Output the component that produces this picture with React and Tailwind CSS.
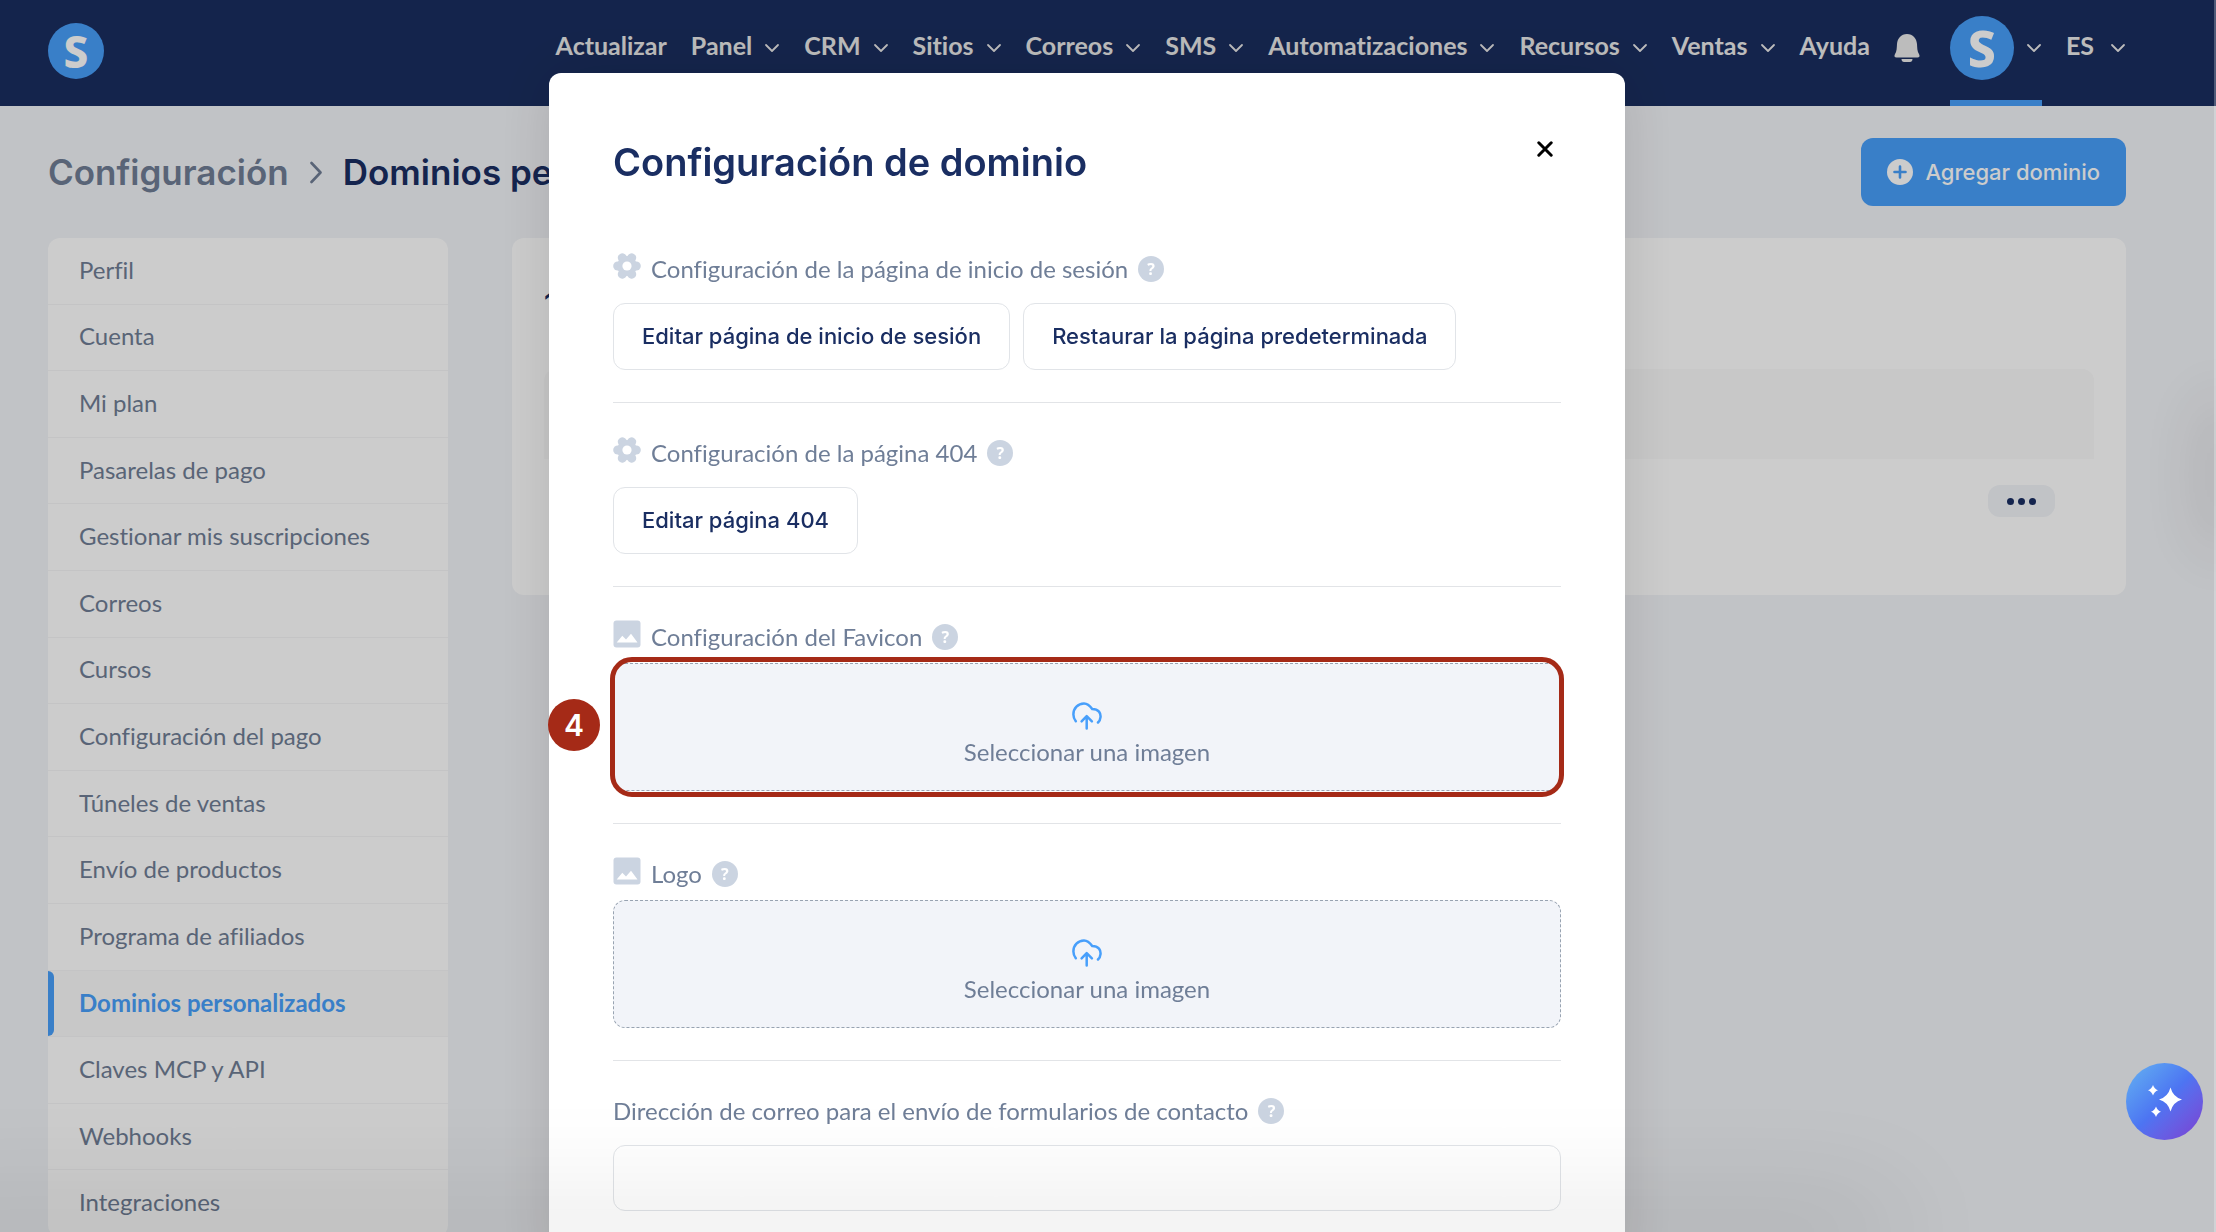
const NAV = [
  ["Actualizar", false],
  ["Panel", true],
  ["CRM", true],
  ["Sitios", true],
  ["Correos", true],
  ["SMS", true],
  ["Automatizaciones", true],
  ["Recursos", true],
  ["Ventas", true],
  ["Ayuda", false],
];

const SIDEBAR = [
  "Perfil",
  "Cuenta",
  "Mi plan",
  "Pasarelas de pago",
  "Gestionar mis suscripciones",
  "Correos",
  "Cursos",
  "Configuración del pago",
  "Túneles de ventas",
  "Envío de productos",
  "Programa de afiliados",
  "Dominios personalizados",
  "Claves MCP y API",
  "Webhooks",
  "Integraciones",
];

function ChevronDown() {
  return (
    <svg className="h-[10px] w-4" viewBox="0 0 16 10" fill="none" stroke="currentColor" strokeWidth="1.8" strokeLinecap="round" strokeLinejoin="round" aria-hidden="true">
      <path d="M2 2l6 6 6-6" />
    </svg>
  );
}

function Gear() {
  return (
    <svg className="mb-[6px] h-7 w-7 shrink-0" viewBox="-14 -14 28 28" aria-hidden="true">
      <g stroke="#cbd4e1" strokeWidth="9" strokeLinecap="round">
        <path d="M-9.3 0H9.3" />
        <path d="M-4.7 -8.2L4.7 8.2" />
        <path d="M4.7 -8.2L-4.7 8.2" />
      </g>
      <circle r="10" fill="#cbd4e1" />
      <circle r="4.6" fill="#fff" />
    </svg>
  );
}

function Picture() {
  return (
    <svg className="mb-[6px] h-7 w-7 shrink-0" viewBox="0 0 28 28" aria-hidden="true">
      <rect x="0.5" y="0.5" width="27" height="27" rx="3" fill="#cbd4e1" />
      <path d="M3.7 22.6L9.3 15.8L13 19.4L18 13.8L24.5 22.6Z" fill="#fff" />
    </svg>
  );
}

function Help() {
  return (
    <button type="button" aria-label="Ayuda" className="flex size-[26px] shrink-0 items-center justify-center rounded-full bg-[#cbd4e1] font-['Noto_Sans',sans-serif] text-[16px] leading-none font-bold text-white">
      ?
    </button>
  );
}

function Label({ icon, children, htmlFor }) {
  const Tag = htmlFor ? "label" : "span";
  return (
    <div className="flex h-9 items-center gap-[10px] text-[24px] leading-9 text-[#6f7e97]">
      {icon}
      <Tag htmlFor={htmlFor}>{children}</Tag>
      <Help />
    </div>
  );
}

function OutlineButton({ children }) {
  return (
    <button type="button" className="h-[67px] rounded-xl border border-[#e1e4e8] bg-white px-7 font-['Inter',sans-serif] text-[22px] font-medium text-[#1a2e62]">
      {children}
    </button>
  );
}

function Upload() {
  return (
    <button type="button" className="flex h-32 w-full flex-col items-center justify-center gap-1 rounded-xl border border-dashed border-[#98a3b1] bg-[#f2f4f9] pt-[18px]">
      <svg className="h-7 w-[30px]" viewBox="0 0 30 28" fill="none" stroke="#489ffb" strokeWidth="2.5" strokeLinecap="round" strokeLinejoin="round" aria-hidden="true">
        <path d="M3.8 19.3C2.3 17.3 1.4 15 1.4 12.4C1.4 6.3 6 1.5 12 1.5C15.4 1.5 17.8 3.6 20.2 7C23 7 25.2 7.6 27 9.6C29.4 12.6 29 17.5 26 20.5" />
        <path d="M14.7 26.6V14.4M9.6 19.4L14.7 14.2L19.9 19.4" />
      </svg>
      <span className="text-[24px] leading-9 text-[#6f7e97]">Seleccionar una imagen</span>
    </button>
  );
}

function Header() {
  return (
    <header className="flex h-[106px] justify-between bg-[#1a2e5f] pr-[90px] pl-12">
      <a href="#inicio" aria-label="Inicio" className="mt-[23px] flex size-14 items-center justify-center rounded-full bg-[#489ffb] font-['Noto_Sans',sans-serif] text-[44px] leading-none font-extrabold text-white">
        S
      </a>
      <nav className="flex h-24 items-center gap-6 text-[25px] font-bold text-[#ebebeb]">
        {NAV.map(([name, menu]) => (
          <button type="button" key={name} className="flex items-center gap-3">
            <span className="pb-1">{name}</span>
            {menu && <ChevronDown />}
          </button>
        ))}
        <button type="button" aria-label="Notificaciones">
          <svg className="h-7 w-[26px]" viewBox="0 0 26 28" fill="currentColor" aria-hidden="true">
            <path d="M13 0C7 0 3.5 4.5 3 10C2.7 14 3 17 0.8 20.5C0 22.2 0.6 23.6 2.5 23.6H23.5C25.4 23.6 26 22.2 25.2 20.5C23 17 23.3 14 23 10C22.5 4.5 19 0 13 0Z" />
            <path d="M7.5 25H18.5C18.5 27 17.4 28 16 28H10C8.6 28 7.5 27 7.5 25Z" />
          </svg>
        </button>
        <button type="button" aria-label="Mi cuenta" className="relative ml-[6px] flex h-24 items-center gap-3">
          <span className="flex size-16 items-center justify-center rounded-full bg-[#489ffb] font-['Noto_Sans',sans-serif] text-[50px] leading-none font-extrabold text-white">S</span>
          <ChevronDown />
          <span className="absolute inset-x-0 -bottom-[10px] h-[6px] bg-[#489ffb]" />
        </button>
        <button type="button" className="flex items-center gap-4">
          <span className="pb-1">ES</span>
          <ChevronDown />
        </button>
      </nav>
    </header>
  );
}

function Sidebar() {
  return (
    <aside className="w-[400px] shrink-0 overflow-hidden rounded-xl bg-white">
      <ul className="grid h-[999px] auto-rows-fr">
        {SIDEBAR.map((name) => {
          const active = name === "Dominios personalizados";
          return (
            <li key={name} className={active ? "flex border-b border-[#f5f5f7] bg-[#fafafa]" : "flex border-b border-[#f5f5f7]"}>
              <a
                href="#seccion"
                className={
                  active
                    ? "flex flex-1 items-center text-[24px] font-bold text-[#489ffb] before:mr-[25px] before:h-full before:w-[6px] before:rounded-r-md before:bg-[#489ffb]"
                    : "flex flex-1 items-center pb-[2px] pl-[31px] text-[24px] text-[#707e95]"
                }
              >
                {name}
              </a>
            </li>
          );
        })}
      </ul>
    </aside>
  );
}

function Modal() {
  return (
    <section role="dialog" aria-labelledby="titulo" className="relative w-full max-w-[1076px] self-start rounded-xl bg-white px-16 pt-16 pb-16 shadow-[0_0_60px_rgba(0,0,0,0.12)]">
      <div className="flex justify-between">
        <h2 id="titulo" className="font-['Inter',sans-serif] text-[38px] leading-[50px] font-semibold text-[#1a2e62]">
          Configuración de dominio
        </h2>
        <button type="button" aria-label="Cerrar" className="mr-2 flex h-6 items-center">
          <svg className="size-4" viewBox="0 0 16 16" stroke="#000" strokeWidth="3" strokeLinecap="round" aria-hidden="true">
            <path d="M1.8 1.8L14.2 14.2M14.2 1.8L1.8 14.2" />
          </svg>
        </button>
      </div>

      <div className="mt-8 divide-y divide-[#e2e4e7]">
        <div className="py-8">
          <Label icon={<Gear />}>Configuración de la página de inicio de sesión</Label>
          <div className="mt-4 flex gap-[13px]">
            <OutlineButton>Editar página de inicio de sesión</OutlineButton>
            <OutlineButton>Restaurar la página predeterminada</OutlineButton>
          </div>
        </div>
        <div className="py-8">
          <Label icon={<Gear />}>Configuración de la página 404</Label>
          <div className="mt-4 flex">
            <OutlineButton>Editar página 404</OutlineButton>
          </div>
        </div>
        <div className="py-8">
          <Label icon={<Picture />}>Configuración del Favicon</Label>
          <div className="relative mt-2">
            <Upload />
            <div className="pointer-events-none absolute -inset-x-[3px] -inset-y-[6px] rounded-[22px] border-5 border-[#a52a17]" />
            <span className="absolute top-9 -left-[65px] flex size-[52px] items-center justify-center rounded-full bg-[#a52a17] font-['Inter',sans-serif] text-[30px] font-semibold text-white">
              4
            </span>
          </div>
        </div>
        <div className="py-8">
          <Label icon={<Picture />}>Logo</Label>
          <div className="mt-2">
            <Upload />
          </div>
        </div>
        <div className="pt-8">
          <Label htmlFor="correo">Dirección de correo para el envío de formularios de contacto</Label>
          <input id="correo" type="email" className="mt-4 block h-[66px] w-full rounded-xl border border-[#e1e4e8] bg-white px-6 text-[24px] text-[#1a2e62]" />
        </div>
      </div>
    </section>
  );
}

export default function App() {
  return (
    <div className="h-screen overflow-hidden bg-[#f2f4f8] font-['Lato',sans-serif] [font-variant-ligatures:none]">
      <Header />
      <main className="pr-[90px] pl-12">
        <div className="flex h-[132px] items-center justify-between">
          <h1 className="flex items-center gap-[21px] font-['Inter',sans-serif] text-[35px] font-semibold text-[#1a2e62]">
            <a href="#configuracion" className="text-[#707e95]">Configuración</a>
            <svg className="h-6 w-[12px]" viewBox="0 0 12 24" fill="none" stroke="#707e95" strokeWidth="2.6" strokeLinecap="round" strokeLinejoin="round" aria-hidden="true">
              <path d="M1.5 3L10.5 12.5L1.5 22" />
            </svg>
            <span>Dominios personalizados</span>
          </h1>
          <button type="button" className="flex h-[68px] items-center gap-3 rounded-xl bg-[#489ffb] px-[26px] font-['Inter',sans-serif] text-[22px] font-medium text-white">
            <svg className="size-[26px]" viewBox="0 0 26 26" aria-hidden="true">
              <circle cx="13" cy="13" r="13" fill="#fff" />
              <path d="M13 7.5V18.5M7.5 13H18.5" stroke="#489ffb" strokeWidth="2.6" strokeLinecap="round" />
            </svg>
            Agregar dominio
          </button>
        </div>
        <div className="flex items-start gap-16">
          <Sidebar />
          <section className="flex-1 rounded-xl bg-white px-8 pb-[78px]">
            <h2 className="flex h-[131px] items-center font-['Inter',sans-serif] text-[28px] font-semibold text-[#1a2e62]">1</h2>
            <div className="h-[90px] rounded-t-xl bg-[#fafafa]" />
            <div className="flex justify-end pt-[26px] pr-[39px]">
              <button type="button" aria-label="Más opciones" className="flex h-8 w-[67px] items-center justify-center gap-1 rounded-xl bg-[#f2f4f8]">
                <span className="size-[7px] rounded-full bg-[#1a2e62]" />
                <span className="size-[7px] rounded-full bg-[#1a2e62]" />
                <span className="size-[7px] rounded-full bg-[#1a2e62]" />
              </button>
            </div>
          </section>
        </div>
      </main>

      <div className="fixed inset-0 flex justify-center overflow-hidden bg-black/20 pt-[73px] pr-[42px]">
        <Modal />
      </div>

      <div className="pointer-events-none fixed -bottom-px -left-24 right-[340px] h-px shadow-[0_0_110px_14px_rgba(0,0,0,0.22)]" />
      <div className="pointer-events-none fixed top-[400px] -right-[10px] h-[150px] w-[10px] rounded-full shadow-[0_0_70px_4px_rgba(0,0,0,0.25)]" />
      <div className="pointer-events-none fixed inset-y-0 right-0 w-[2px] bg-white/25" />

      <button type="button" aria-label="Asistente" className="fixed right-[13px] bottom-[92px] size-[77px] rounded-full bg-linear-to-br from-[#67b3f0] via-[#4d74f2] to-[#7a3cd0]">
        <svg viewBox="0 0 77 77" fill="#fff" aria-hidden="true">
          <path d="M44.5 24.5Q47 34 56 36.5Q47 39 44.5 48.5Q42 39 33 36.5Q42 34 44.5 24.5Z" />
          <path d="M27 22Q28.3 26 32 27.3Q28.3 28.6 27 32.6Q25.7 28.6 22 27.3Q25.7 26 27 22Z" />
          <path d="M30 43.4Q31.3 47.4 35 48.7Q31.3 50 30 54Q28.7 50 25 48.7Q28.7 47.4 30 43.4Z" />
        </svg>
      </button>
    </div>
  );
}
